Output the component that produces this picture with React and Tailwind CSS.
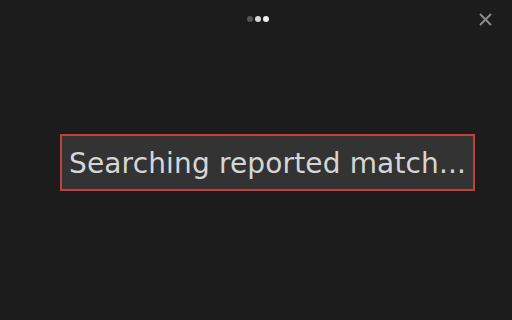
export default function App() {
  return (
    <div className="w-[512px] h-[320px] bg-[#1c1c1c] relative overflow-hidden" style={{ fontFamily: '"DejaVu Sans", sans-serif' }}>
      <div className="flex justify-center gap-[2px] pt-[16px] pl-[4px]">
        <span className="w-[6px] h-[6px] rounded-full bg-[#555]" />
        <span className="w-[6px] h-[6px] rounded-full bg-[#d8d8d8]" />
        <span className="w-[6px] h-[6px] rounded-full bg-[#eee]" />
      </div>
      <button className="absolute right-[20px] top-[13px] text-[#8a8a8a]">
        <svg width="13" height="13" viewBox="0 0 13 13" stroke="currentColor" strokeWidth="2">
          <path d="M1 1L12 12M12 1L1 12" />
        </svg>
      </button>
      <div className="mt-[112px] ml-[60px] w-[415px] h-[57px] border-2 border-[#c0403c] bg-[#333333] flex items-center pl-[7px] pt-[3px]">
        <span className="text-[28px] text-[#d6d6d6] tracking-[0.15px] whitespace-nowrap">Searching reported match...</span>
      </div>
    </div>
  );
}
